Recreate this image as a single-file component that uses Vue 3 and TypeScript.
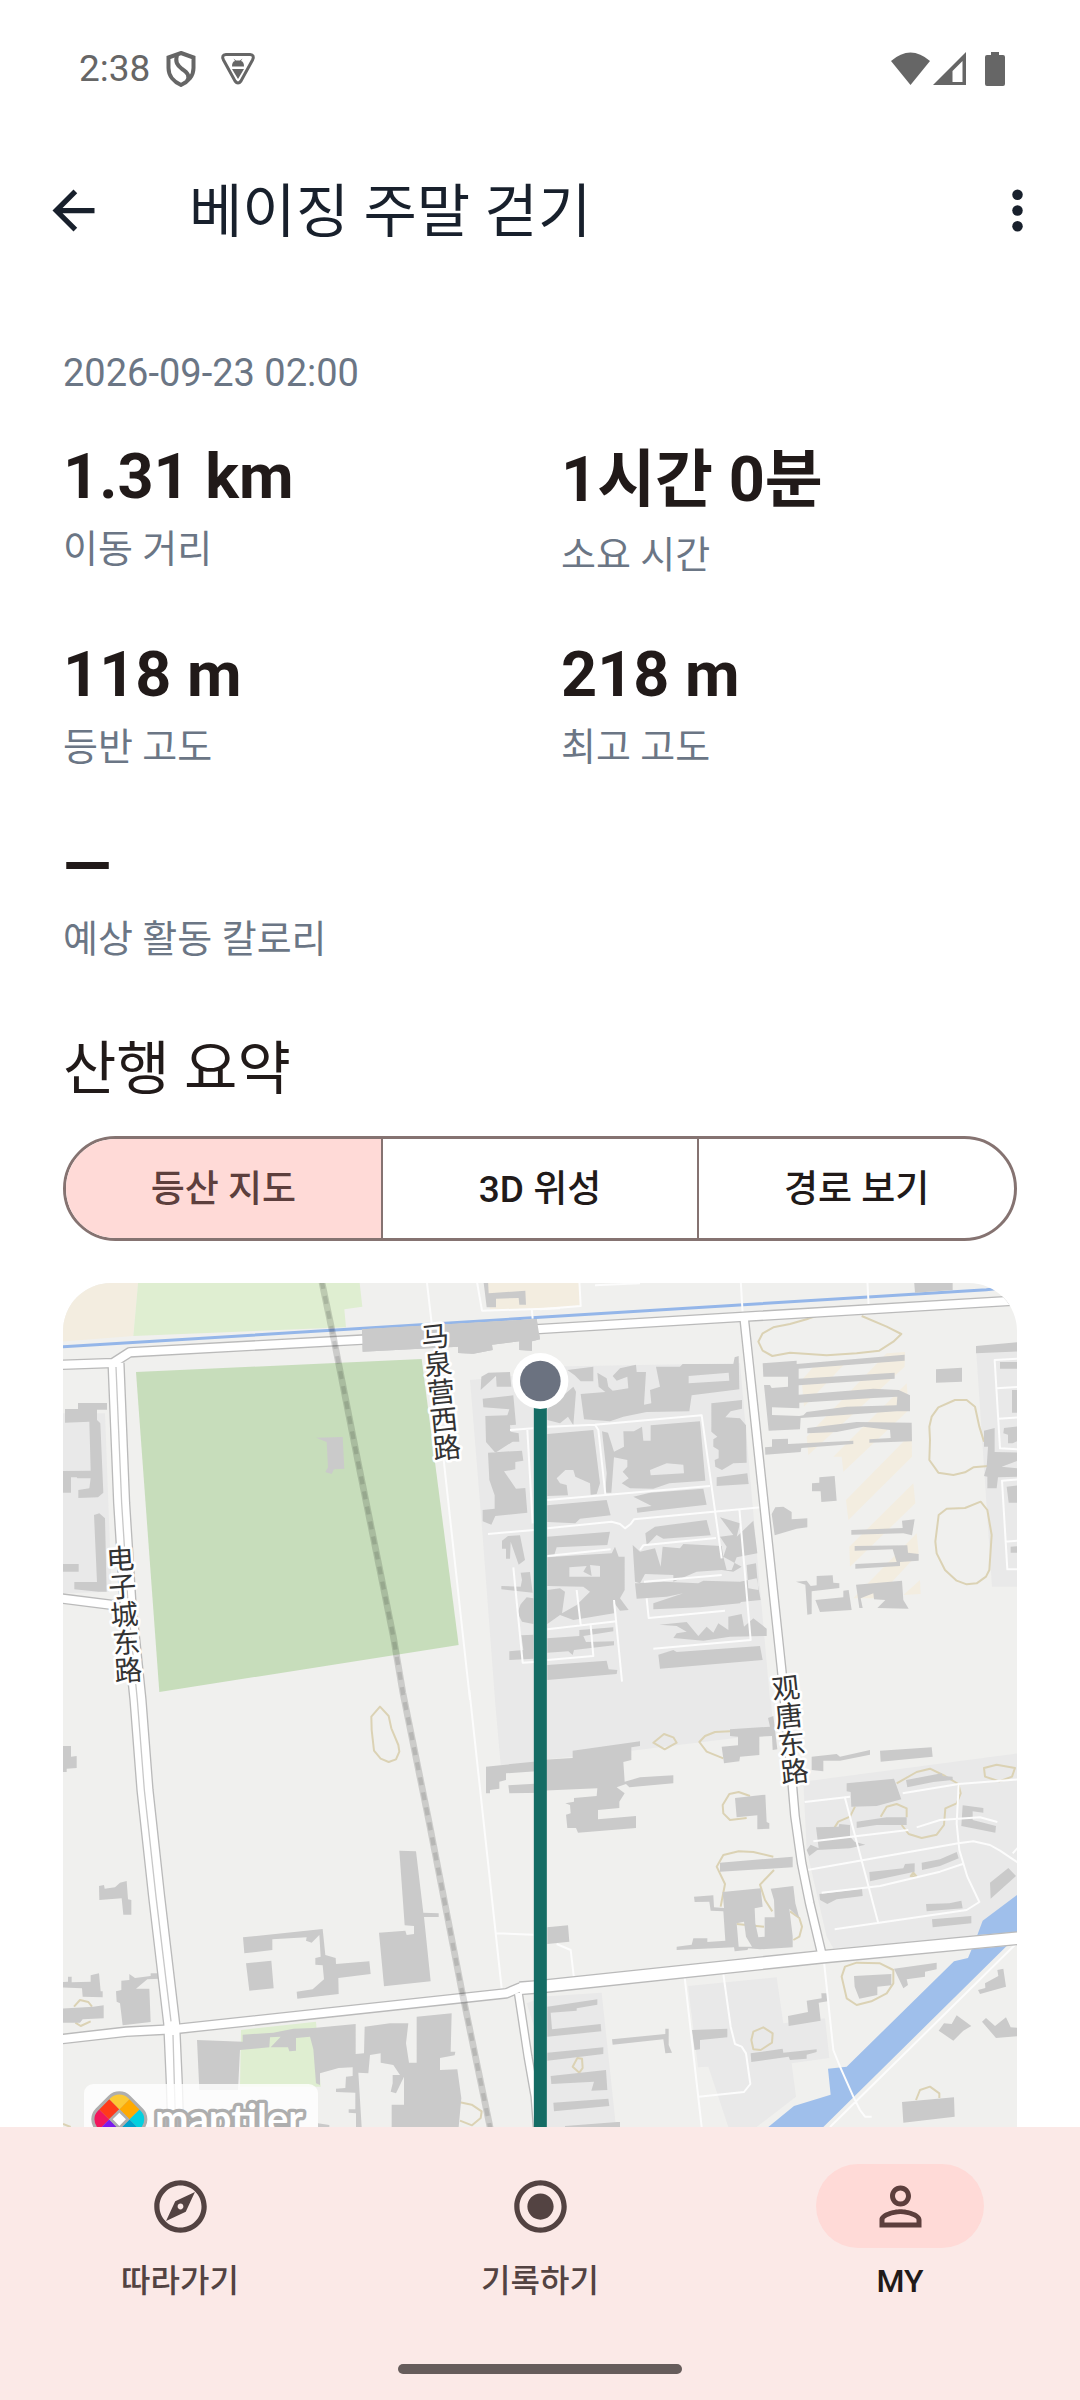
<script setup lang="ts">
import { ref } from 'vue'

interface Stat {
  value: string
  label: string
  hangul?: boolean
}

interface Sheet {
  dx: number
  dy: number
  zones: string
  sand: string
  lawn: string
  contours: string
  buildings: string
  lanes: string
}

const stats: Stat[] = [
  { value: '1.31 km', label: '이동 거리' },
  { value: '1시간 0분', label: '소요 시간', hangul: true },
  { value: '118 m', label: '등반 고도' },
  { value: '218 m', label: '최고 고도' },
  { value: '—', label: '예상 활동 칼로리' },
]

const views = ['등산 지도', '3D 위성', '경로 보기']
const activeView = ref(0)

const tabs = [
  {
    label: '따라가기',
    icon: 'M12 2C6.48 2 2 6.48 2 12s4.48 10 10 10 10-4.48 10-10S17.52 2 12 2zm0 18c-4.41 0-8-3.59-8-8s3.59-8 8-8 8 3.59 8 8-3.59 8-8 8zm-5.5-2.5l7.51-3.49L17.5 6.5 9.99 9.99 6.5 17.5zm5.5-6.6c.61 0 1.1.49 1.1 1.1s-.49 1.1-1.1 1.1-1.1-.49-1.1-1.1.49-1.1 1.1-1.1z',
  },
  {
    label: '기록하기',
    icon: 'M12 7c-2.76 0-5 2.24-5 5s2.24 5 5 5 5-2.24 5-5-2.24-5-5-5zm0-5C6.48 2 2 6.48 2 12s4.48 10 10 10 10-4.48 10-10S17.52 2 12 2zm0 18c-4.42 0-8-3.58-8-8s3.58-8 8-8 8 3.58 8 8-3.58 8-8 8z',
  },
  {
    label: 'MY',
    icon: 'M12 5.9a2.1 2.1 0 1 1 0 4.2 2.1 2.1 0 0 1 0-4.2m0 9c2.97 0 6.1 1.46 6.1 2.1v1.1H5.9V17c0-.64 3.13-2.1 6.1-2.1M12 4C9.79 4 8 5.79 8 8s1.79 4 4 4 4-1.79 4-4-1.79-4-4-4zm0 9c-2.67 0-8 1.34-8 4v3h16v-3c0-2.66-5.33-4-8-4z',
  },
]
const activeTab = ref(2)

// The city map is split in four sheets, each with its own origin.
const sheets: Sheet[] = [
  {
    dx: -9,
    dy: -39,
    zones: 'M1230 330L1450 310V1290H1305L1265 760ZM9 430L135 430L155 965L9 970Z',
    sand: 'M0 30H235L220 198L0 215ZM1270 30H1500V115L1290 118Z',
    lawn: 'M235 30H898L907 110L853 118L858 172L220 198Z',
    contours: '',
    buildings:
      'M906 178L1430 147L1440 208L1416 214V242L1378 240V214L1296 224L1298 240L1240 251L1194 249V230L908 245ZM1270 30H1284L1286 70L1396 62L1398 104L1378 104L1376 84L1308 86V112L1280 112ZM54 399H141V419H111V450L121 460L130 668L114 682L55 684V660L88 655L92 625H52L50 622H33V668L0 668V603L92 602L88 455L15 458V417H54ZM102 735L118 730L135 745L140 965L116 965L43 958V936L111 936ZM0 882H56V905H0ZM768 503L848 501L853 596L822 598L815 612L796 606L804 592L800 516ZM1264 320L1285 308L1350 306L1354 350H1310L1308 318L1262 360ZM1268 386L1360 376L1368 464L1350 466L1352 485L1376 490L1378 515L1358 515L1306 548L1278 516L1276 438L1342 436L1348 418L1270 412ZM1284 548L1386 542L1390 572L1366 576V598L1332 604L1368 656L1396 654L1402 728L1306 738L1294 764L1268 754V720L1304 716V676L1288 630ZM1326 812L1344 798L1380 796L1395 870L1376 884L1352 815L1350 866H1338V836H1326ZM1324 948L1382 950L1386 930L1382 908L1410 906L1418 968L1324 958ZM1382 1003L1400 982L1420 985V1062L1386 1055L1372 1028ZM1384 1096L1420 1094V1166L1348 1170V1144L1390 1140Z',
    lanes:
      'M1100 30L1115 160M1150 560L1230 1290M1250 30L1266 122L1500 115M1415 115L1418 146M1350 480L1420 475M1402 480L1418 760M1284 792L1422 780M1360 892L1388 1178L1422 1176',
  },
  {
    dx: 1431,
    dy: -39,
    zones: 'M0 290L600 280L690 1290H0ZM1308 235L1450 230V950H1356Z',
    sand: 'M0 30H118L122 108L0 118ZM830 280L920 275L792 410L785 330ZM1040 250L1095 246L1094 290L805 555L800 500ZM1100 340L1106 420L910 605L905 560L880 560ZM1115 490L1116 560L925 750L918 690ZM1120 640L1126 700L930 890L928 830ZM1130 790L1136 850L1010 985L940 985ZM1140 930L1142 972L1090 975Z',
    lawn: '',
    contours:
      'M830 138L805 146L750 162L700 172L668 190L655 215L668 242L697 258L750 248L860 256L950 250L1018 242L1060 215L1084 192L1040 170L965 138M1332 515L1318 470L1305 410L1280 390L1245 390L1195 412L1175 440L1168 470L1170 510L1168 570L1195 608L1240 615L1275 607L1300 592L1345 588M1196 735L1220 716L1275 714L1322 695L1342 720L1355 795L1348 900L1338 920L1310 940L1280 943L1250 932L1215 900L1190 850L1186 815Z',
    buildings:
      'M82 300L160 290V334L122 334L104 316ZM22 418L100 350L108 365L100 466L84 440L60 460L22 450ZM122 372L196 366L176 350L172 308L200 325L205 350L218 362L265 355L262 320L230 332L218 318L240 295L288 284L290 306L318 306L312 404L334 400L330 360L360 350L348 290L420 290L428 282L580 282L584 262L596 258L598 358L455 376L448 424L320 426L250 440L210 454L132 448ZM446 318L566 308L568 332L446 340ZM514 400L606 390V416L572 424L556 442L600 445L618 466L620 578L580 580L546 600L526 590L524 570L536 565V540L520 530V508L532 500L514 485ZM530 622L622 610L626 642L530 648ZM22 492L160 480L180 640L170 672L152 674L150 640L106 620L100 600L76 600L50 625L60 640L80 645L84 676L22 678ZM186 484L204 488L222 545L252 530L250 484L282 484L306 470L310 512H332V466L480 454L496 632L388 640L340 656L270 655L245 640L266 625L248 605L262 590V570L222 562L214 668L196 668L200 610ZM330 600L380 580L430 584L432 610L332 616ZM22 706L200 690L212 736L120 746L106 760L22 756ZM280 680L330 668L490 656L500 704L340 722L292 728L290 714L335 708ZM316 790L345 770L500 750L512 796L370 806L350 795L320 826ZM22 800L210 785L202 825L50 832L42 858L22 858ZM22 862L115 856L215 850L225 830L236 860L254 860V960L240 985L266 1020L240 1022L220 995L222 1030L100 1050L60 1035L22 1062V960L60 955L75 965L66 1030L110 1005L150 965L130 950L22 948ZM88 892L140 888L130 905L155 918L150 885L180 888V920L88 920ZM278 825L300 845L345 835L362 890L368 830L420 835L430 822L545 828L550 860L605 890L580 905L545 900L470 905L400 935V915L315 912L300 940L285 935ZM285 940L370 935L475 940L490 932L600 935L650 925L662 990L603 996L600 1000L480 1012L340 1018V1000L430 970L380 980L290 986ZM540 742L600 760L590 800L640 752L652 850L590 862L575 900L560 900L550 860L560 830L540 800L580 795ZM620 885L648 880L655 960L625 955ZM358 1064L440 1056L475 1098L500 1070L520 1088L535 1060L565 1080V1040L605 1032L612 1070L640 1045L680 1076V1098L570 1100L490 1112L400 1104L410 1090L440 1085L410 1068ZM355 1154L400 1140L410 1146L660 1128L668 1170L360 1196ZM22 1105L118 1098V1080L220 1072V1084L130 1098L138 1116L222 1114V1126L102 1140L98 1155L85 1144L22 1148ZM22 1185L200 1172L206 1198L232 1200L230 1212L22 1230ZM668 280L770 272V282L1094 254V272L776 296L744 300V320L670 320ZM744 300L776 296V326L1064 308V326L776 346V374L1000 356L1076 360L1110 376V424L1070 424L782 444L780 478L686 482L672 345L690 345L695 354L744 350ZM778 398L1000 384L1072 380L1070 406L920 410L800 426L790 436L778 438L696 435V412L778 415ZM802 474L950 456L1115 458L1116 514L988 518V508L1052 504L1050 480L970 470L890 486L802 490ZM675 532L696 530V508L744 506V522L940 512V522L784 534L782 546L676 554ZM1188 298L1266 293V335L1188 338ZM816 640L838 638V622L884 618L890 692L844 696L842 664H816ZM695 732L706 712L730 710L755 726V748L802 745V772L770 776L704 796ZM934 780L1088 774L1086 752L1124 748L1116 796L1090 790L934 794ZM944 828L1102 826L1104 848L1136 852V872L1080 876V888L946 896V882L1070 876L1058 838L944 842ZM768 935L800 932L812 948L830 946V918L878 916L880 938L898 940V954L815 964V1032L802 1034L796 944ZM826 990L910 982V962L926 960L935 1020L840 1026ZM948 944L1086 932L1090 990L1106 1016L1012 1014L1036 990L1002 988L1000 970L962 985L968 1014H958ZM1308 228L1440 216V244L1308 250ZM1380 276H1440V296H1380ZM1416 360H1440V428H1416ZM1392 474L1440 468V510L1418 520H1404V494L1390 490ZM1332 482L1364 474V546L1440 548V570L1385 590L1440 596V620L1374 622L1370 655H1342V620L1332 618L1340 590L1344 530H1332ZM1400 650L1440 645V698H1406ZM1412 830L1440 828V848H1412ZM1122 30H1238V60L1125 68Z',
    lanes:
      'M602 30L608 130M982 30L986 108M0 118L122 108L118 30M165 46L300 40M22 470L165 464L485 436L545 865M22 690L510 648M22 775L215 755L240 762L255 775L272 762L282 748L663 712M165 464L175 480L196 672M598 716L632 1110L340 1136M22 858L212 838M300 840L310 826L528 804M312 935L545 915M320 985L326 1044L555 1022M22 1078L230 1054M222 990L246 1235M22 1170L160 1158L152 1066M1440 266L1364 270L1380 535L1440 538M1370 355L1440 350M1376 446L1440 442M1440 628L1386 632L1402 898H1440M1395 815L1440 812M110 960L122 1064',
  },
  {
    dx: -9,
    dy: 1221,
    zones: 'M1305 30H1450V215L1322 225ZM1400 940L1450 920V1100Z',
    sand: '',
    lawn: 'M543 1020L768 995L782 1190H540Z',
    contours:
      'M934 80L960 50L986 78L994 115L1015 165L1018 185L1008 208L986 216L962 206L942 182L935 120ZM42 950L60 930L85 936L96 950M46 998L62 1008L92 994M1196 1236L1235 1244L1265 1264L1262 1284L1236 1306L1200 1292M9 1302L32 1311',
    buildings:
      'M0 168H33V200L50 198V234L20 236V246H0ZM117 588L132 585L134 596L165 592L180 578L200 573L204 628L214 630V674L190 674L185 625L118 630ZM24 860H35V877L92 875V856L117 850L122 904H128V922L68 920L66 895L0 892V877L24 875ZM0 956L100 950L131 946V985L68 988L60 998H0ZM168 904L184 900V872L208 870V852L225 864L272 858V850H299V866L262 868L228 896H268L272 996L188 1006L180 940L170 935ZM549 742L788 717L796 795L827 804L828 822L928 814L932 852L835 864L836 912L712 926L710 905L758 898L792 868L788 826L766 824V804L782 800L778 735L755 758L738 752L740 742L637 748V780L553 790ZM558 820L634 812L641 895L568 902ZM1018 482L1068 484L1090 668L1136 670V681L1092 681L1112 874L972 889L957 728L1036 722L1040 735L1062 732V708L1034 706ZM411 1050L548 1055V1034L640 1028L700 1016L760 1014L887 1002V1092L912 1090L914 1010L990 1000L1045 1000L1038 1060L1047 1118H1070V980L1175 970L1172 1085H1186L1184 1096L1140 1104V1140L1192 1138L1204 1225L1196 1311V1540H995V1244H1032V1160L1008 1210L992 1205L998 1180V1155L1020 1155L1000 1125L962 1118V1090L930 1095L925 1150L895 1148L905 1311V1540H888V1270L866 1268V1258H886V1208L828 1206V1196L856 1194L858 1160L878 1158V1132L836 1134L780 1150V1185L768 1180L760 1078L750 1040L708 1044V1082L688 1084L684 1072L632 1072L662 1040L630 1042L628 1072L540 1080L534 1200L418 1200ZM774 1300L808 1305V1330H774ZM1278 230L1450 212V242L1338 250V270L1318 275V296L1290 300V310H1278ZM1345 286L1450 280V308L1348 310Z',
    lanes: 'M1228 0L1325 895M1306 730L1420 734',
  },
  {
    dx: 1431,
    dy: 1221,
    zones: 'M0 30H693L700 130L275 182L0 210ZM790 275L1450 188V730L880 775L860 740L800 480ZM0 920L185 908L228 1311L250 1540H0ZM444 888L710 862L730 1000L855 985L868 1104L755 1120L768 1220L650 1311H565L505 1130L474 1132Z',
    sand: '',
    lawn: '',
    contours:
      'M340 158L372 132L400 142L410 158L374 178ZM570 124L525 126L495 138L478 156L500 185L550 205M630 318L596 306L568 312L548 345L550 370L570 390L620 384M700 500L640 486L596 484L550 495L530 530L555 582L542 650M702 540L660 584L675 630L697 664M590 702L672 710M750 664L778 684L786 710L778 740L760 750M1070 280L1130 246L1170 236L1215 258L1255 282L1262 310L1250 340L1216 355L1212 405L1190 434L1145 444L1106 432L1085 405M1022 380L1040 350L1070 342L1100 355V382M945 350L930 380L895 395L882 415M1332 234L1370 224L1425 234L1416 260L1378 274L1335 260ZM905 860L915 830L950 818L1020 820L1060 840V880L1040 910L994 934L950 945L920 925ZM634 1050L640 1025L670 1012L698 1030L696 1058L662 1080L640 1078ZM98 1130L112 1104L126 1106L128 1134L118 1148ZM1128 1230L1140 1200L1170 1190L1198 1210V1224M1112 558L1120 548L1130 560Z',
    buildings:
      'M0 210L98 204V182L300 154V168L274 172V210L250 216L254 275L300 262L400 256V280L268 292L258 282L230 292L254 310L238 335V354L174 360V388L288 378V414L114 428L108 414H82L78 374L92 370L90 345L76 340L102 335V324L170 318L172 295L0 302ZM570 118L690 110L684 84L700 78L712 178L698 180L696 138L658 140V195L600 200L598 214L552 220L545 170L594 166V140L570 138ZM585 324L676 314L680 396L688 400V416L652 418V376L590 382ZM540 518L758 500V532L540 545ZM462 620L520 616L522 652L552 654L548 606L662 595L668 650L644 655L646 700L655 742L674 740V682H704L702 630L692 596L760 588L766 640L778 684L748 656L758 738V772L660 778L625 775L622 780L584 784L582 772L410 780V770L455 764L460 745L502 745V756L556 752L550 664L512 662L508 635L464 636ZM590 700L612 695L618 740L636 770L596 770ZM22 712L84 706L88 755L22 762ZM815 200L890 192L900 200L990 180V194L900 212L850 212V244L815 240ZM1020 182L1175 172L1178 200L1022 215ZM920 280L1062 266L1084 328L1010 348L934 350L932 306L920 304ZM1098 270L1205 250L1208 258L1238 260V270L1180 276L1102 292ZM950 395L1040 382L1100 382V405L1010 405L950 414ZM828 412L896 410L898 402L930 405V440L944 455L976 464L930 475L832 480L808 498L800 480L812 464L836 475ZM988 546L1090 535L1095 522L1124 520V545L990 574ZM1145 518L1200 508L1250 486L1256 505L1200 528L1146 540ZM838 612L966 596L968 618L890 628L862 642L840 630ZM1268 346L1330 354V368L1298 364V390L1368 408L1366 428L1264 408ZM1350 578L1405 534L1428 558L1352 626ZM1158 642L1228 640L1264 632L1268 655L1160 664ZM1176 688L1294 678V700L1178 712ZM942 858L1054 852V886L1012 890V915L958 926L944 890ZM1062 836L1190 818V838L1155 845V860L1100 868L1104 885L1090 895ZM1314 900L1336 894L1335 880L1375 858L1372 840L1390 836L1398 890L1320 912ZM1196 1022L1212 1000L1235 1002L1250 976L1294 1008L1270 1022L1240 1052ZM1326 995L1338 984L1365 1008L1398 982L1412 1012L1440 1014V1038L1368 1044ZM22 950L172 928V944L110 955V962L32 968L36 1018L182 1002L184 1024L22 1040ZM22 1088L190 1072V1092L22 1112ZM32 1158L198 1140L202 1200L154 1202L162 1175L34 1182ZM40 1238L205 1226L208 1248L42 1264ZM75 1308L232 1296L240 1296V1321H75ZM216 1048L376 1032V1016H386V1065L396 1088L376 1090L370 1048L218 1064ZM456 1020L562 1016V1042L480 1050V1078L464 1080ZM744 978L804 966L800 932L845 925L844 910H863V934L836 938L842 992L746 1008ZM632 1090L728 1076L730 1088L830 1078V1086L800 1094V1106L750 1110L746 1100L634 1116ZM1086 1236L1242 1222L1244 1280L1090 1298Z',
    lanes:
      'M794 336L930 320M915 324L1014 696M884 718L1280 660L1318 636L1282 560L1258 480L1250 400L1256 282M1088 310L1256 282L1440 268M820 454L1105 420M802 540L1255 460L1300 454L1350 465L1380 482L1440 522M845 608L1020 588L1200 545L1268 522M1130 412L1200 390L1320 382L1372 396M50 762L92 780L102 865M434 862L485 1311M550 852L572 1010L585 1062L605 1070L618 1090L631 1182L612 1206L476 1220M852 815L880 1080L900 1130L940 1220L960 1260L975 1280H995M1440 750L870 1311M1418 490L1440 466',
  },
]

const roads = [
  { d: 'M-9 946L150 966', width: 24 },
  { d: 'M1366 2130L1395 2321L1416 2440L1440 2760', width: 20 },
  { d: 'M2043 101L2156 1161L2188 1506L2196 1600L2216 1741L2240 1860L2276 2011', width: 22 },
  { d: 'M159 240L176 661L195 961L225 1251L246 1521L281 1841L326 2221L334 2401L345 2760', width: 44 },
  { d: 'M-20 246L150 240L200 208L896 170L1430 138L2030 102L2870 52', width: 24 },
  { d: 'M-10 2269L190 2246L330 2239L1330 2131L1370 2114L1431 2110', width: 24 },
  { d: 'M1370 2116L1431 2111L2281 2021L2870 1965', width: 34 },
]

const streetNames = [
  { name: '马泉营西路', x: 1112, y: 117, tilt: -6 },
  { name: '电子城东路', x: 169, y: 784, tilt: -4 },
  { name: '观唐东路', x: 2164, y: 1172, tilt: -6 },
]

const railway = 'M776 -6L811 161L884 531L991 1061L1020 1231L1099 1621L1196 2121L1281 2532L1330 2760'

const logoCells = [
  { x: -64, y: -64, fill: '#fbc935' },
  { x: -21, y: -64, fill: '#ffaa01' },
  { x: 22, y: -64, fill: '#03d0df' },
  { x: -64, y: -21, fill: '#ff3a1a' },
  { x: 22, y: -21, fill: '#00a1cc' },
  { x: -64, y: 22, fill: '#f1175d' },
  { x: -21, y: 22, fill: '#7c1aed' },
  { x: 22, y: 22, fill: '#3a1888' },
]
</script>

<template>
  <div class="screen">
    <div class="status">
      <span class="clock">2:38</span>
      <svg class="shield" viewBox="0 0 30 36" aria-hidden="true">
        <path d="M15 2L27.500 6.500V17C27.500 25 22 31 15 34C8 31 2.500 25 2.500 17V6.500Z" />
        <path d="M11 4C9 11 11 14 16 18C22 22 24 25 21 30" />
      </svg>
      <svg class="guard" viewBox="0 0 36 36" aria-hidden="true">
        <path class="guard-frame" d="M6 3.500H30Q35 4 32.500 9L21 30Q18 34 15 30L3.500 9Q1 4 6 3.500Z" />
        <path class="guard-body" d="M12 15.500Q12 10.500 15 10L13.500 7.500L16 9.500H20L22.500 7.500L21 10Q24 10.500 24 15.500ZM12 18H24L18 28Z" />
      </svg>
      <span class="spacer"></span>
      <svg class="wifi" viewBox="0 0 39 34" aria-hidden="true"><path d="M0 9Q19.500 -8 39 9L19.500 33Z" /></svg>
      <svg class="signal" viewBox="0 0 33 34" aria-hidden="true">
        <path fill-rule="evenodd" d="M33 0V33H0ZM29.500 9L19.500 19V30H29.500Z" />
      </svg>
      <svg class="battery" viewBox="0 0 20 34" aria-hidden="true">
        <path d="M6 0H14V3H18Q20 3 20 5V32Q20 34 18 34H2Q0 34 0 32V5Q0 3 2 3H6Z" />
      </svg>
    </div>

    <header class="bar">
      <button class="icon-button" type="button" aria-label="뒤로">
        <svg viewBox="0 0 24 24"><path d="M20 11H7.830l5.590-5.590L12 4l-8 8 8 8 1.410-1.410L7.830 13H20v-2z" /></svg>
      </button>
      <h1>베이징 주말 걷기</h1>
      <button class="icon-button" type="button" aria-label="더보기">
        <svg viewBox="0 0 24 24">
          <circle cx="12" cy="6" r="2" />
          <circle cx="12" cy="12" r="2" />
          <circle cx="12" cy="18" r="2" />
        </svg>
      </button>
    </header>

    <main class="content">
      <time class="date" datetime="2026-09-23T02:00">2026-09-23 02:00</time>

      <dl class="stats">
        <div v-for="stat in stats" :key="stat.label" class="stat">
          <dd class="value" :class="{ hangul: stat.hangul }">{{ stat.value }}</dd>
          <dt class="label">{{ stat.label }}</dt>
        </div>
      </dl>

      <h2>산행 요약</h2>

      <div class="segments" role="group" aria-label="지도 보기 방식">
        <button
          v-for="(view, i) in views"
          :key="view"
          type="button"
          class="segment"
          :class="{ active: i === activeView }"
          :aria-pressed="i === activeView"
          @click="activeView = i"
        >
          {{ view }}
        </button>
      </div>

      <div class="map">
        <svg viewBox="0 0 2862 2757" role="img" aria-label="등산 지도">
          <defs>
            <clipPath id="logo-shape"><rect x="-64" y="-64" width="128" height="128" rx="38" /></clipPath>
          </defs>
          <rect class="land" width="2862" height="2757" />
          <g v-for="s in sheets" :key="`g${s.dx},${s.dy}`" :transform="`translate(${s.dx} ${s.dy})`">
            <path class="zone" :d="s.zones" />
            <path class="sand" :d="s.sand" />
            <path class="lawn" :d="s.lawn" />
          </g>
          <path class="park" d="M219 267L1076 228L1187 1086L289 1227Z" />
          <path class="canal" d="M-9 192L1431 103L2770 20L2870 10" />
          <g v-for="s in sheets" :key="`b${s.dx},${s.dy}`" :transform="`translate(${s.dx} ${s.dy})`">
            <path class="contour" :d="s.contours" />
            <path class="building" :d="s.buildings" />
          </g>
          <path
            class="water"
            d="M2870 1830V1946L2743 1956L2759 1913ZM2726 1999L2831 1989L2281 2532L2080 2757H1900L2116 2532L2193 2469L2303 2435L2295 2357L2351 2351L2673 2035L2715 2025Z"
          />
          <g v-for="s in sheets" :key="`l${s.dx},${s.dy}`" :transform="`translate(${s.dx} ${s.dy})`">
            <path class="lane" :d="s.lanes" />
          </g>
          <path v-for="r in roads" :key="`c${r.d}`" class="casing" :d="r.d" :stroke-width="r.width + 8" />
          <path v-for="r in roads" :key="`f${r.d}`" class="road" :d="r.d" :stroke-width="r.width" />
          <path class="median" d="M159 252L176 661L195 961L223 1251L244 1521L279 1841L324 2215M330 2256L334 2401L345 2760" />
          <path class="building" d="M897 139L1421 108L1431 169L1407 175V203L1369 201V175L1287 185L1289 201L1231 212L1185 210V191L899 206Z" />
          <path class="rail" :d="railway" />
          <path class="ties" :d="railway" />
          <text
            v-for="s in streetNames"
            :key="s.name"
            class="street"
            :transform="`translate(${s.x} ${s.y}) rotate(${s.tilt})`"
          >{{ s.name }}</text>

          <rect class="credit" x="63" y="2403" width="702" height="237" rx="28" />
          <g transform="translate(169 2509) rotate(45)">
            <rect class="logo-edge" x="-73" y="-73" width="146" height="146" rx="46" />
            <g clip-path="url(#logo-shape)">
              <rect v-for="c in logoCells" :key="c.fill" :x="c.x" :y="c.y" width="43" height="43" :fill="c.fill" />
            </g>
            <rect class="logo-core" x="-18" y="-18" width="36" height="36" />
          </g>
          <text class="wordmark" x="276" y="2550">maptiler</text>

          <path class="route" d="M1432 294V2757" />
          <circle class="start-ring" cx="1432" cy="294" r="84" />
          <circle class="start" cx="1432" cy="294" r="61" />
        </svg>
      </div>
    </main>

    <nav class="nav">
      <div class="tabs">
        <button
          v-for="(tab, i) in tabs"
          :key="tab.label"
          type="button"
          class="tab"
          :class="{ current: i === activeTab }"
          :aria-current="i === activeTab ? 'page' : undefined"
          @click="activeTab = i"
        >
          <span class="pill">
            <svg viewBox="0 0 24 24" aria-hidden="true"><path :d="tab.icon" /></svg>
          </span>
          <span class="tab-label">{{ tab.label }}</span>
        </button>
      </div>
      <div class="handle"></div>
    </nav>
  </div>
</template>

<style>
body {
  margin: 0;
}
</style>

<style scoped>
.screen {
  display: flex;
  flex-direction: column;
  height: 100vh;
  background: #fff;
  color: #211a19;
  font-family: Roboto, 'Noto Sans CJK KR', sans-serif;
}

button {
  margin: 0;
  padding: 0;
  border: 0;
  background: none;
  color: inherit;
  font: inherit;
  cursor: pointer;
}

svg {
  display: block;
  flex: none;
}

.status {
  display: flex;
  align-items: center;
  box-sizing: border-box;
  height: 126px;
  padding: 12px 75px 0 79px;
  color: #666;
  fill: #666;
}

.clock {
  font-size: 37px;
  line-height: 44px;
}

.shield {
  width: 30px;
  height: 36px;
  margin-left: 16px;
  fill: none;
  stroke: #666;
  stroke-width: 4;
}

.guard {
  width: 36px;
  height: 36px;
  margin-left: 24px;
}

.guard-frame {
  fill: none;
  stroke: #666;
  stroke-width: 3;
}

.spacer {
  flex: 1;
}

.wifi {
  width: 39px;
  height: 34px;
}

.signal {
  width: 33px;
  height: 34px;
  margin-left: 3px;
}

.battery {
  width: 20px;
  height: 34px;
  margin-left: 19px;
}

.bar {
  display: flex;
  align-items: center;
  height: 168px;
  padding: 0 10px 0 21px;
  color: #18202c;
}

.icon-button {
  display: flex;
  align-items: center;
  justify-content: center;
  width: 105px;
  height: 105px;
}

.icon-button svg {
  width: 63px;
  height: 63px;
  fill: currentColor;
}

h1,
h2 {
  margin: 0;
  font-size: 58px;
  font-weight: 400;
  line-height: 68px;
}

h1 {
  flex: 1;
  padding: 4px 0 0 63px;
}

.content {
  flex: 1;
  min-height: 0;
  padding: 52px 63px 0;
  overflow-y: auto;
  scrollbar-width: none;
}

.date,
.label {
  display: block;
  color: #6b7685;
  font-size: 38px;
  line-height: 54px;
}

.stats {
  display: grid;
  grid-template-columns: 1fr 1fr;
  gap: 56px 42px;
  margin: 40px 0 69px;
}

.stat {
  display: flex;
  flex-direction: column;
  gap: 8px;
}

.value {
  margin: 0;
  font-size: 63px;
  font-weight: 700;
  line-height: 74px;
}

.value.hangul {
  line-height: 80px;
}

.segments {
  display: flex;
  box-sizing: border-box;
  height: 105px;
  margin: 33px 0 42px;
  border: 3px solid #857371;
  border-radius: 53px;
  overflow: hidden;
}

.segment {
  flex: 1;
  padding-top: 2px;
  font-size: 37px;
  font-weight: 500;
  line-height: 54px;
}

.segment + .segment {
  border-left: 2px solid #857371;
}

.segment.active {
  background: #ffdad7;
  color: #5d3f3d;
}

.map {
  border-radius: 48px;
  overflow: hidden;
}

.map svg {
  width: 100%;
  height: auto;
}

.land {
  fill: #f0f0ee;
}

.zone {
  fill: #e9e9e9;
}

.sand {
  fill: #f3ede0;
}

.lawn {
  fill: #dfeed1;
}

.park {
  fill: #c7ddbb;
}

.water {
  fill: #9fbfeb;
}

.canal {
  fill: none;
  stroke: #94b6e9;
  stroke-width: 9;
}

.contour {
  fill: none;
  stroke: #dbd2b4;
  stroke-width: 6;
  stroke-linejoin: round;
}

.building {
  fill: #cacaca;
  fill-rule: evenodd;
}

.lane {
  fill: none;
  stroke: #fcfcfc;
  stroke-width: 6;
  stroke-linejoin: round;
}

.casing,
.road {
  fill: none;
  stroke-linejoin: round;
}

.casing {
  stroke: #bababa;
}

.road {
  stroke: #fff;
}

.median {
  fill: none;
  stroke: #c8c8c8;
  stroke-width: 4;
}

.rail {
  fill: none;
  stroke: rgba(0, 0, 0, 0.15);
  stroke-width: 20;
}

.ties {
  fill: none;
  stroke: rgba(0, 0, 0, 0.1);
  stroke-width: 13;
  stroke-dasharray: 24 22;
}

.street {
  fill: #333;
  stroke: #fff;
  stroke-width: 16;
  stroke-linejoin: round;
  paint-order: stroke;
  font-family: 'Noto Sans CJK SC', sans-serif;
  font-size: 84px;
  writing-mode: vertical-rl;
}

.credit {
  fill: rgba(255, 255, 255, 0.8);
}

.logo-edge {
  fill: #aeaeae;
}

.logo-core {
  fill: #fff;
  stroke: #aeaeae;
  stroke-width: 8;
}

.wordmark {
  fill: #fff;
  stroke: #aeaeae;
  stroke-width: 20;
  stroke-linejoin: round;
  paint-order: stroke;
  font-family: Lato, sans-serif;
  font-size: 120px;
  font-weight: 700;
}

.route {
  stroke: #146c64;
  stroke-width: 39;
}

.start-ring {
  fill: #fff;
}

.start {
  fill: #6b7280;
}

.nav {
  padding: 37px 0 26px;
  background: #fbe9e7;
}

.tabs {
  display: flex;
}

.tab {
  display: flex;
  flex: 1;
  flex-direction: column;
  align-items: center;
  gap: 12px;
  color: #534342;
}

.pill {
  display: flex;
  align-items: center;
  justify-content: center;
  width: 168px;
  height: 84px;
  border-radius: 42px;
}

.pill svg {
  width: 63px;
  height: 63px;
  fill: currentColor;
}

.tab-label {
  font-size: 32px;
  font-weight: 500;
  line-height: 42px;
}

.current .pill {
  background: #ffdad7;
  color: #5d3f3d;
}

.current .tab-label {
  color: #211a19;
}

.handle {
  width: 284px;
  height: 10px;
  margin: 62px auto 0;
  border-radius: 5px;
  background: #665c5b;
}
</style>
